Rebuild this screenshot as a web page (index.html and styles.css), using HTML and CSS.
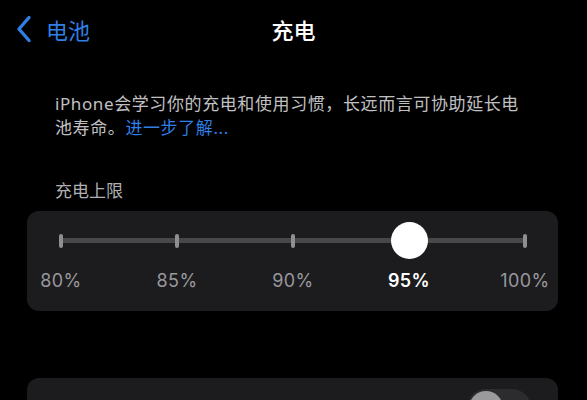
FILE: index.html
```html
<!DOCTYPE html>
<html lang="zh">
<head>
<meta charset="utf-8">
<title>充电</title>
<link rel="stylesheet" href="styles.css">
</head>
<body>
<div class="screen">
  <header class="nav">
    <a class="back" href="#">
      <svg class="chev" width="16" height="28" viewBox="0 0 16 28"><path d="M13 2.5 L3 14 L13 25.5" fill="none" stroke="#2f7fe6" stroke-width="3.4" stroke-linecap="round" stroke-linejoin="round"/></svg>
      <span>电池</span>
    </a>
    <h1 class="title">充电</h1>
    <div class="spacer"></div>
  </header>

  <p class="intro">iPhone会学习你的充电和使用习惯，长远而言可协助延长电池寿命。<a class="link" href="#">进一步了解...</a></p>

  <div class="label">充电上限</div>

  <section class="card slider-card">
    <div class="slider">
      <div class="stop"><div class="mark"><span class="tick"></span></div><div class="pct">80%</div></div>
      <div class="stop"><div class="mark"><span class="tick"></span></div><div class="pct">85%</div></div>
      <div class="stop"><div class="mark"><span class="tick"></span></div><div class="pct">90%</div></div>
      <div class="stop active"><div class="mark"><span class="knob"></span></div><div class="pct">95%</div></div>
      <div class="stop"><div class="mark"><span class="tick"></span></div><div class="pct">100%</div></div>
    </div>
  </section>

  <section class="card row-card">
    <span class="row-text">优化电池充电</span>
    <span class="toggle"><span class="toggle-knob"></span></span>
  </section>
</div>
</body>
</html>
```
FILE: styles.css
```css
html, body {
  margin: 0;
  padding: 0;
  background: #000;
}
body {
  font-family: "Noto Sans", "Noto Sans CJK SC", sans-serif;
  color: #fff;
  overflow: hidden;
}
.screen {
  width: 587px;
  height: 400px;
  overflow: hidden;
}
.nav {
  height: 58px;
  display: grid;
  grid-template-columns: 1fr auto 1fr;
  align-items: center;
}
.back {
  display: flex;
  align-items: center;
  gap: 14px;
  padding-left: 16px;
  color: #2f7fe6;
  text-decoration: none;
  font-size: 22px;
  font-family: "Noto Sans CJK SC", sans-serif;
  line-height: 30px;
}
.chev { display: block; }
.title {
  margin: 0;
  font-size: 22px;
  font-weight: 500;
  font-family: "Noto Sans CJK SC", sans-serif;
  line-height: 30px;
  color: #fff;
}
.intro {
  margin: 34px 0 0 55px;
  width: 472px;
  font-size: 17px;
  line-height: 24px;
  letter-spacing: 0.6px;
  color: #c0c0c3;
  font-family: "Noto Sans", "Noto Sans CJK SC", sans-serif;
}
.link {
  color: #2f7fe6;
  text-decoration: none;
}
.label {
  margin: 38px 0 0 55px;
  font-size: 17px;
  line-height: 24px;
  color: #b0b0b4;
  font-family: "Noto Sans CJK SC", sans-serif;
}
.card {
  background: #1c1c1e;
  border-radius: 12px;
  margin: 0 29px 0 27px;
}
.slider-card {
  margin-top: 9px;
  padding: 11px 3px 18px 4px;
}
.slider {
  display: flex;
  justify-content: space-between;
  position: relative;
}
.slider::before {
  content: "";
  position: absolute;
  left: 30px;
  right: 30px;
  top: 16px;
  height: 5px;
  background: #48484b;
  border-radius: 2px;
}
.stop {
  width: 60px;
  display: flex;
  flex-direction: column;
  align-items: center;
  position: relative;
}
.mark {
  height: 37px;
  display: flex;
  align-items: center;
  justify-content: center;
}
.tick {
  width: 4px;
  height: 14px;
  border-radius: 2px;
  background: #8e8e93;
}
.knob {
  width: 37px;
  height: 37px;
  border-radius: 50%;
  background: #fff;
}
.pct {
  margin-top: 10px;
  font-size: 18px;
  line-height: 24px;
  color: #98989d;
  font-family: "Inter", "Noto Sans", sans-serif;
  letter-spacing: 0.4px;
}
.active .pct {
  color: #fff;
  font-weight: 600;
}
.row-card {
  margin-top: 67px;
  height: 60px;
  display: flex;
  align-items: center;
  justify-content: space-between;
  padding: 0 27px 0 32px;
}
.row-text {
  font-size: 17px;
  color: #6e6e73;
  font-family: "Noto Sans CJK SC", sans-serif;
  letter-spacing: 2px;
}
.toggle {
  width: 64px;
  height: 38px;
  border-radius: 19px;
  background: #2c2c2f;
  display: flex;
  align-items: center;
  padding: 0 2px;
  box-sizing: border-box;
}
.toggle-knob {
  width: 34px;
  height: 34px;
  border-radius: 50%;
  background: #9a9a9c;
}
```
